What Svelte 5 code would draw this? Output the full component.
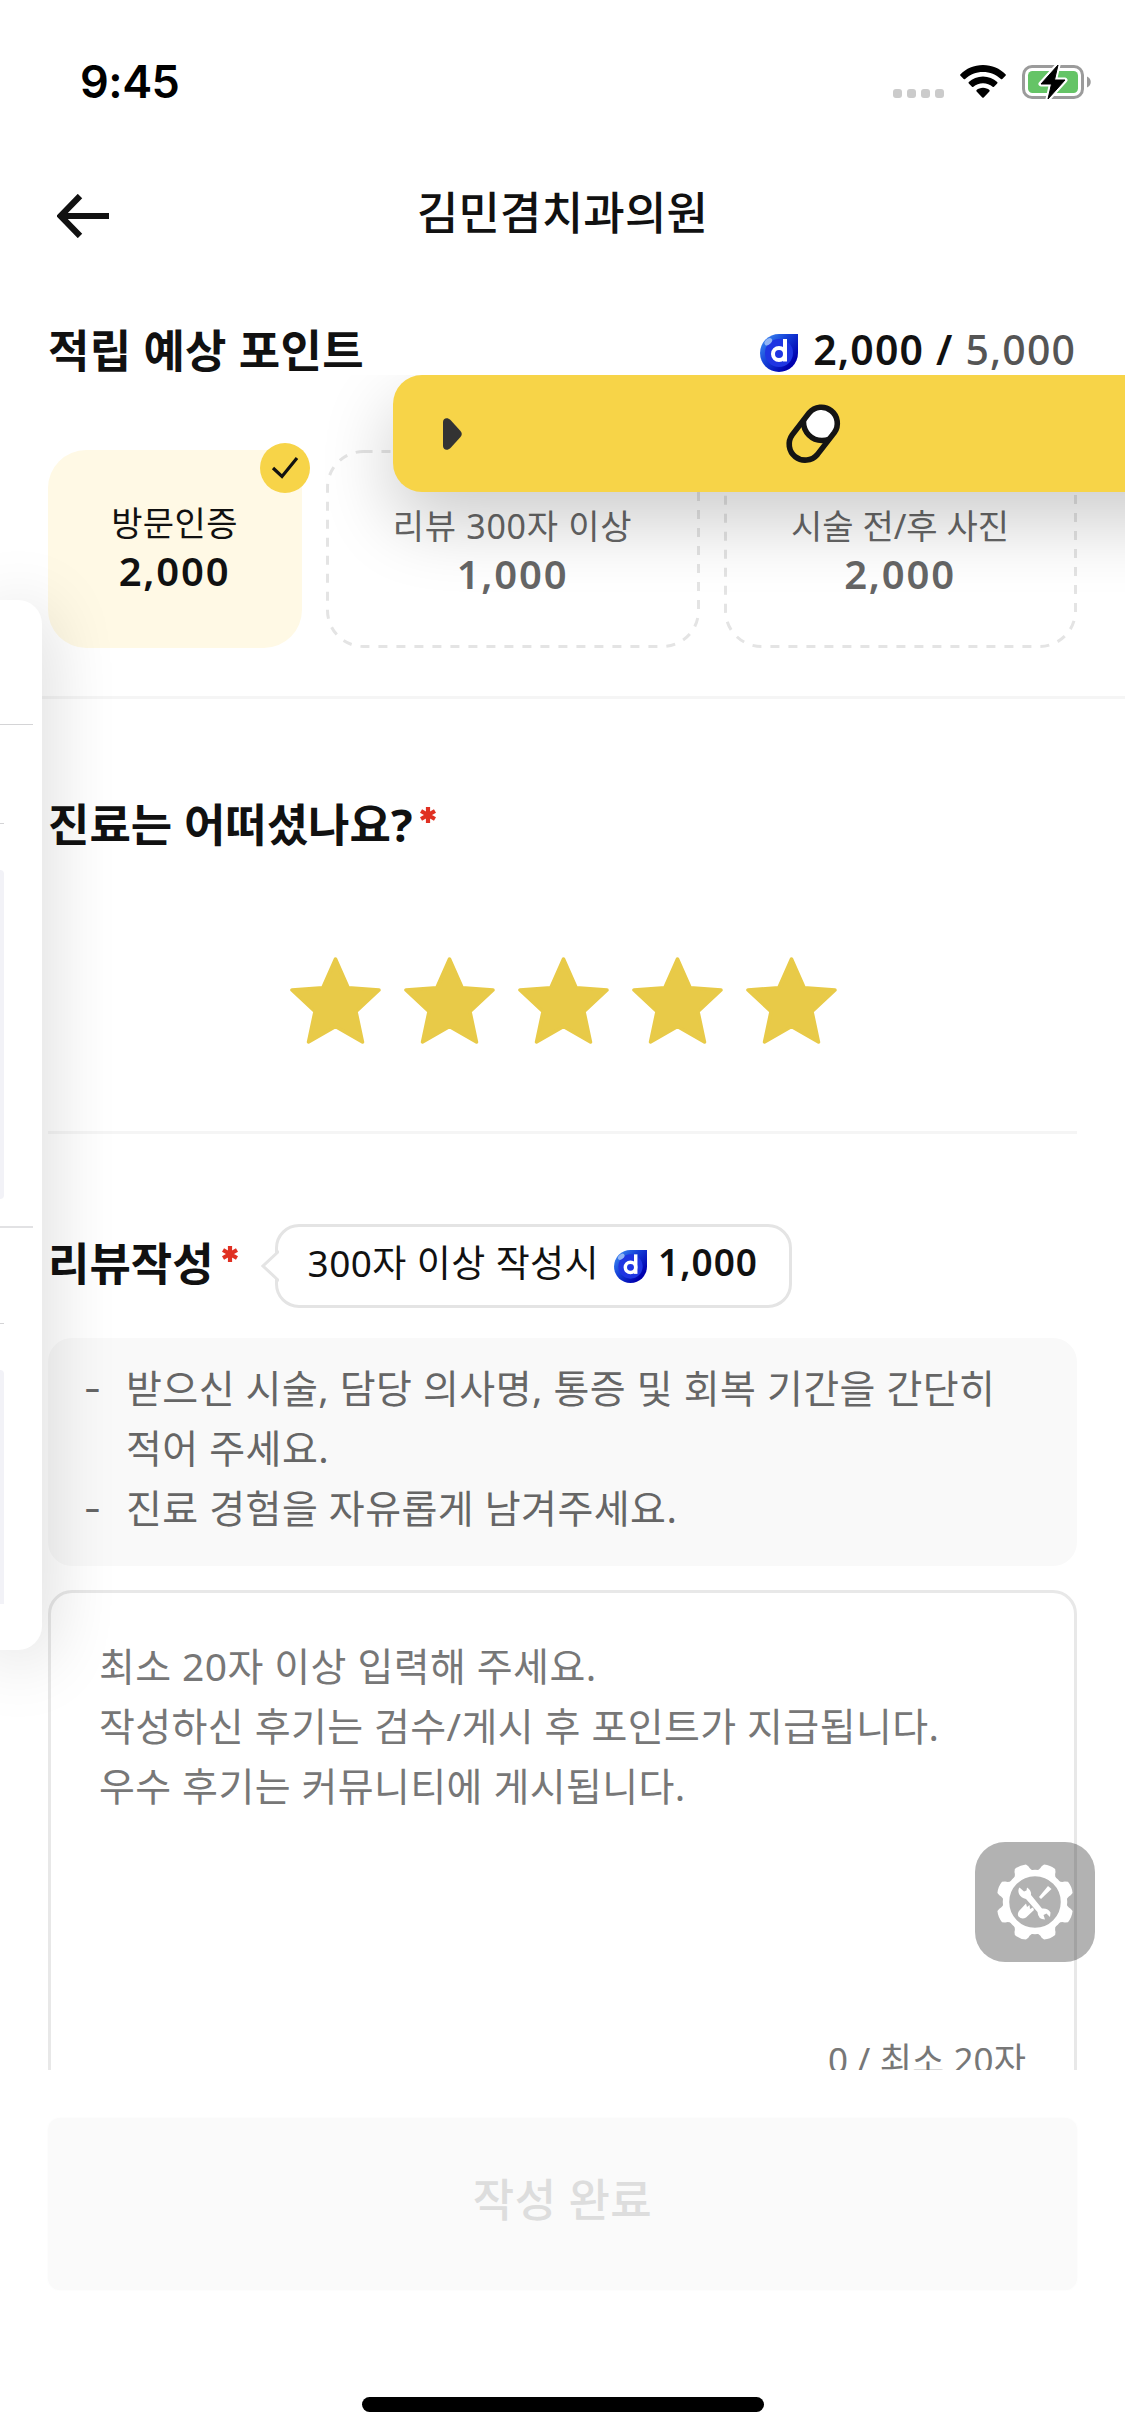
<script>
  const stars = [1, 2, 3, 4, 5];
  const teeth = [22.5, 67.5, 112.5, 157.5, 202.5, 247.5, 292.5, 337.5];
  const goals = [
    { label: '방문인증', points: '2,000', size: 'small', done: true },
    { label: '리뷰 300자 이상', points: '1,000', size: 'large', done: false },
    { label: '시술 전/후 사진', points: '2,000', size: 'medium', done: false }
  ];
</script>

{#snippet coin()}
  <svg class="coin" viewBox="0 0 38 38">
    <defs>
      <linearGradient id="coinEdge" x1="0.1" y1="0.1" x2="0.85" y2="0.75">
        <stop offset="0" stop-color="#3a86f0" />
        <stop offset="0.45" stop-color="#1540d8" />
        <stop offset="1" stop-color="#0000ae" />
      </linearGradient>
    </defs>
    <path d="M19 0H38V19A19 19 0 1 1 19 0Z" fill="url(#coinEdge)" />
    <circle cx="19" cy="19" r="14" fill="#1f35e2" />
    <ellipse cx="8.3" cy="7.7" rx="4.4" ry="2.8" transform="rotate(-42 8.3 7.7)" fill="#92b4f4" />
    <circle cx="19" cy="20" r="6" fill="none" stroke="#fff" stroke-width="4" />
    <path d="M25 5V27.5" stroke="#fff" stroke-width="4" />
  </svg>
{/snippet}

<div class="screen">
  <div class="status">
    <span class="clock">9:45</span>
    <div class="indicators">
      <div class="cells"><i></i><i></i><i></i><i></i></div>
      <svg class="wifi" viewBox="0 0 46 34">
        <path d="M23 0C32 0 40 3.600 45.500 9.300Q46.200 10 45.500 10.800L42.300 14Q41.600 14.600 40.900 14C36 9.500 30 7 23 7S10 9.500 5.100 14Q4.400 14.600 3.700 14L.5 10.800Q-.2 10 .5 9.300C6 3.600 14 0 23 0Z" />
        <path d="M23 11.500C28.500 11.500 33.500 13.600 37.200 17.100Q37.900 17.800 37.200 18.500L34 21.700Q33.300 22.300 32.600 21.700C30 19.500 26.700 18.200 23 18.200S16 19.500 13.400 21.700Q12.700 22.300 12 21.700L8.800 18.500Q8.100 17.800 8.800 17.100C12.500 13.600 17.500 11.500 23 11.500Z" />
        <path d="M23 22.800C25.600 22.800 27.800 23.700 29.400 25.100Q30 25.800 29.400 26.500L23.700 32.400Q23 33.200 22.300 32.400L16.600 26.500Q16 25.800 16.600 25.100C18.200 23.700 20.400 22.800 23 22.800Z" />
      </svg>
      <svg class="battery" viewBox="0 0 70 36">
        <rect x="1.500" y="2.500" width="59" height="31" rx="8.500" fill="none" stroke="#9b9b9b" stroke-width="3" />
        <rect x="6" y="7" width="50" height="22" rx="4.500" fill="#65c466" />
        <path d="M65 12.500C70 14.500 70 21.500 65 23.500Z" fill="#9b9b9b" />
        <path d="M36 1L19 20H29.500L26 35L43 16H32.500Z" fill="#000" stroke="#fff" stroke-width="5" stroke-linejoin="round" />
        <path d="M36 1L19 20H29.500L26 35L43 16H32.500Z" fill="#000" stroke="#000" stroke-width="1" stroke-linejoin="round" />
      </svg>
    </div>
  </div>

  <header>
    <svg class="back" viewBox="0 0 52 44">
      <path d="M52 22H4M23 2L3.500 22L23 42" fill="none" stroke="#111" stroke-width="6.200" />
    </svg>
    <h1>김민겸치과의원</h1>
  </header>

  <main>
    <section class="points">
      <div class="points-head">
        <h2>적립 예상 포인트</h2>
        <div class="total">
          {@render coin()}
          <b>2,000</b><b class="slash">/</b><span>5,000</span>
        </div>
      </div>
      <div class="goals">
        {#each goals as goal}
          <div class="goal {goal.size}" class:done={goal.done}>
            {#if goal.done}
              <svg class="badge" viewBox="0 0 50 50">
                <circle cx="25" cy="25" r="25" fill="#f7d448" />
                <path d="M13 25L22 33.500L37 15" fill="none" stroke="#111" stroke-width="3.200" />
              </svg>
            {:else}
              <svg class="outline"><rect /></svg>
            {/if}
            <span>{goal.label}</span>
            <b>{goal.points}</b>
          </div>
        {/each}
      </div>
    </section>

    <section class="rating">
      <h2>진료는 어떠셨나요?<svg class="req" viewBox="0 0 16 16"><path d="M8 0V16M1 4L15 12M1 12L15 4" /></svg></h2>
      <div class="stars">
        {#each stars as star}
          <svg viewBox="0 0 91 87">
            <path d="M45.500 2L58.200 30.700L89 33L66 54.500L72.500 85L45.500 69.500L18.500 85L25 54.500L2 33L32.800 30.700Z" />
          </svg>
        {/each}
      </div>
    </section>

    <section class="review">
      <div class="review-head">
        <h2>리뷰작성<svg class="req" viewBox="0 0 16 16"><path d="M8 0V16M1 4L15 12M1 12L15 4" /></svg></h2>
        <div class="bubble">
          <svg class="tail" viewBox="0 0 18 36"><path d="M18 3L2 18L18 33" /></svg>
          <span>300자 이상 작성시</span>
          {@render coin()}
          <b>1,000</b>
        </div>
      </div>
      <ul>
        <li>받으신 시술, 담당 의사명, 통증 및 회복 기간을 간단히<br />적어 주세요.</li>
        <li>진료 경험을 자유롭게 남겨주세요.</li>
      </ul>
      <div class="editor">
        <p>최소 20자 이상 입력해 주세요.<br />작성하신 후기는 검수/게시 후 포인트가 지급됩니다.<br />우수 후기는 커뮤니티에 게시됩니다.</p>
        <span class="count">0 / 최소 20자</span>
      </div>
    </section>
  </main>

  <button class="submit" disabled>작성 완료</button>
  <div class="home"></div>

  <aside class="drawer">
    <hr />
    <hr class="short" />
    <div class="block first"></div>
    <hr class="second" />
    <hr class="short" />
    <div class="block last"></div>
  </aside>

  <div class="banner">
    <svg class="play" viewBox="0 0 19 32">
      <path d="M0 4C0 0 4.500 -1 7.500 2L17.500 13Q20 16 17.500 19L7.500 30C4.500 33 0 32 0 28Z" fill="#333" />
    </svg>
    <svg class="pill" viewBox="0 0 56 62">
      <defs>
        <clipPath id="pillBody"><path d="M24.200 10.800A16 16 0 0 1 49.300 30.600L32.300 52.600A16 16 0 0 1 7.200 32.800Z" /></clipPath>
      </defs>
      <g clip-path="url(#pillBody)">
        <circle cx="37" cy="20" r="18.500" fill="#fff" stroke="#141414" stroke-width="5.500" />
      </g>
      <path d="M24.200 10.800A16 16 0 0 1 49.300 30.600L32.300 52.600A16 16 0 0 1 7.200 32.800Z" fill="none" stroke="#141414" stroke-width="5.600" />
    </svg>
  </div>

  <div class="tools">
    <svg viewBox="-40 -40 80 80">
      <circle r="29" fill="none" stroke="#fff" stroke-width="6.500" />
      {#each teeth as angle}
        <path d="M-11.800 -28.500Q-8 -31 -7.500 -35.500L-6 -38.200Q0 -40 6 -38.200L7.500 -35.500Q8 -31 11.800 -28.500Z" transform="rotate({angle})" fill="#fff" />
      {/each}
      <path d="M4 -5L13 -16L16.500 -13L6 -3Z" fill="#fff" />
      <path d="M-16 9L-9 1.500L-8 5L-5.500 3L-5 7L-2 5.500L-1 8L-9 15.500Q-13 18 -16.500 14.500Q-18 12 -16 9Z" fill="#fff" />
      <path d="M-16 -8Q-17.500 -12 -15.500 -14.500L-11 -10.500L-8.500 -11.500L-8 -14.500Q-3.500 -12 -4 -7L7 6.500Q13 6 15.500 10.500L15 15L11.500 11.500L8.500 13L10 17.500Q3 17.500 2.500 10L-9 -3Q-14 -4 -16 -8Z" fill="#fff" />
    </svg>
  </div>
</div>

<style>
  :global(body) {
    background: #fff;
  }
  .screen {
    position: relative;
    display: flex;
    flex-direction: column;
    width: 1125px;
    height: 2436px;
    overflow: hidden;
    background: #fff;
    color: #111;
    font-family: 'Noto Sans', 'Noto Sans CJK KR', sans-serif;
    letter-spacing: 0.4px;
  }
  svg {
    display: block;
    flex: none;
  }
  h1,
  h2,
  p,
  ul {
    margin: 0;
    padding: 0;
  }
  .status {
    display: flex;
    align-items: center;
    justify-content: space-between;
    box-sizing: border-box;
    height: 132px;
    padding: 32px 33px 0 80px;
  }
  .clock {
    font: 600 45px/54px Inter, sans-serif;
    letter-spacing: -0.5px;
    color: #000;
  }
  .indicators {
    display: flex;
    align-items: center;
  }
  .cells {
    display: flex;
    gap: 5px;
    margin: 23px 16px 0 0;
  }
  .cells i {
    width: 9px;
    height: 9px;
    border-radius: 3px;
    background: #cbcbcb;
  }
  .wifi {
    width: 46px;
    height: 34px;
    margin-right: 16px;
  }
  .battery {
    width: 70px;
    height: 36px;
  }
  header {
    display: grid;
    grid-template-columns: 52px 1fr 52px;
    align-items: center;
    height: 168px;
    padding: 0 57px;
  }
  .back {
    width: 52px;
    height: 44px;
  }
  h1 {
    padding-bottom: 6px;
    font-size: 45px;
    font-weight: 500;
    line-height: 60px;
    text-align: center;
    letter-spacing: 0.2px;
  }
  main {
    height: 1770px;
    overflow: hidden;
  }
  h2 {
    display: flex;
    font-size: 45px;
    font-weight: 700;
    line-height: 60px;
    letter-spacing: 0;
  }
  .req {
    width: 16px;
    height: 16px;
    margin: 12px 0 0 8px;
  }
  .req path {
    fill: none;
    stroke: #e03022;
    stroke-width: 4.200;
  }
  b {
    font-weight: 600;
  }
  .points {
    padding: 0 48px 48px;
    border-bottom: 3px solid #f5f5f5;
  }
  .points-head {
    display: flex;
    align-items: center;
    justify-content: space-between;
    height: 102px;
  }
  .points-head h2 {
    letter-spacing: 0.3px;
  }
  .total {
    display: flex;
    align-items: center;
    margin: -5px 1px 0 0;
    font-size: 41px;
    line-height: 60px;
    letter-spacing: 1.1px;
  }
  .total .coin {
    width: 38px;
    height: 38px;
    margin: 9px 15px 0 0;
  }
  .total .slash {
    margin: 0 12px;
  }
  .total span {
    color: #555;
    font-weight: 500;
  }
  .goals {
    display: flex;
    gap: 24px;
    margin-top: 48px;
  }
  .goal {
    position: relative;
    display: flex;
    flex-direction: column;
    box-sizing: border-box;
    height: 198px;
    padding: 52px 1px 0 0;
    color: #666;
    font-size: 34px;
    line-height: 48px;
    text-align: center;
  }
  .goal b {
    font-size: 40px;
    letter-spacing: 1.8px;
  }
  .goal.done {
    padding-top: 49px;
    border-radius: 38px;
    background: #fff9e5;
    color: #111;
  }
  .small {
    width: 254px;
  }
  .large {
    width: 374px;
    letter-spacing: 0.7px;
  }
  .medium {
    width: 353px;
    letter-spacing: 0;
  }
  .badge {
    position: absolute;
    top: -7px;
    right: -8px;
    width: 50px;
    height: 50px;
  }
  .outline {
    position: absolute;
    inset: 0;
    width: 100%;
    height: 100%;
  }
  .outline rect {
    x: 1.5px;
    y: 1.5px;
    width: calc(100% - 3px);
    height: calc(100% - 3px);
    rx: 36px;
    fill: none;
    stroke: #e4e4e4;
    stroke-width: 3px;
    stroke-dasharray: 9 9;
  }
  .rating {
    margin: 0 48px;
    padding: 96px 0 87px;
    border-bottom: 3px solid #f5f5f5;
  }
  .stars {
    display: flex;
    justify-content: center;
    gap: 23px;
    margin-top: 102px;
    padding-left: 2px;
  }
  .stars svg {
    width: 91px;
    height: 87px;
  }
  .stars path {
    fill: #e8ca48;
    stroke: #e8ca48;
    stroke-width: 3.500;
    stroke-linejoin: round;
  }
  .review {
    padding: 90px 48px 0;
  }
  .review-head {
    display: flex;
    align-items: center;
    gap: 37px;
  }
  .review-head h2 {
    margin-top: -5px;
  }
  .bubble {
    position: relative;
    display: flex;
    align-items: center;
    box-sizing: border-box;
    width: 517px;
    height: 84px;
    padding: 0 0 10px 30px;
    border: 3px solid #e4e4e4;
    border-radius: 24px;
    font-size: 37px;
    white-space: nowrap;
  }
  .bubble .coin {
    width: 33px;
    height: 33px;
    margin: 10px 11px 0 15px;
  }
  .bubble b {
    letter-spacing: 1px;
  }
  .tail {
    position: absolute;
    left: -17px;
    top: 21px;
    width: 18px;
    height: 36px;
  }
  .tail path {
    fill: #fff;
    stroke: #e4e4e4;
    stroke-width: 3;
  }
  ul {
    box-sizing: border-box;
    height: 228px;
    margin-top: 30px;
    padding: 20px 36px 0;
    border-radius: 24px;
    background: #f9f9f9;
    color: #666;
    font-size: 39px;
    line-height: 60px;
    letter-spacing: 0.45px;
    list-style: none;
    white-space: nowrap;
  }
  li {
    display: grid;
    grid-template-columns: 42px 1fr;
  }
  li::before {
    content: '-';
    grid-row: span 2;
    transform: translate(3px, -2px) scaleX(1.3);
    transform-origin: 9px 50%;
  }
  .editor {
    display: flex;
    flex-direction: column;
    justify-content: space-between;
    box-sizing: border-box;
    height: 540px;
    margin-top: 24px;
    padding: 43px 48px 42px;
    border: 3px solid #e8e8e8;
    border-radius: 24px;
    color: #777;
    font-size: 39px;
    line-height: 60px;
    white-space: nowrap;
  }
  .count {
    align-self: flex-end;
    font-size: 35px;
    line-height: 50px;
    letter-spacing: 0.1px;
  }
  .submit {
    height: 172px;
    margin: 48px 48px 0;
    padding: 0 0 13px;
    border: 0;
    border-radius: 12px;
    background: #fafafa;
    box-shadow: 0 0 3px #fafafa;
    color: #ddd;
    font: inherit;
    font-size: 45px;
    font-weight: 500;
    letter-spacing: 0.4px;
  }
  .home {
    width: 402px;
    height: 15px;
    margin: 107px auto 0;
    border-radius: 8px;
    background: #000;
  }
  /* Drawer peeking in from the left edge */
  .drawer {
    position: absolute;
    left: 0;
    top: 600px;
    box-sizing: border-box;
    width: 42px;
    height: 1050px;
    padding-top: 124px;
    border-radius: 0 24px 24px 0;
    background: #fff;
    box-shadow: 0 9px 72px rgba(0, 0, 0, 0.2);
  }
  .drawer hr {
    width: 33px;
    height: 1px;
    margin: 0;
    border: 0;
    background: #d4d4d6;
  }
  .drawer hr.short {
    width: 4px;
    margin: 98px 0 46px;
  }
  .drawer hr.second {
    height: 2px;
    margin-top: 27px;
    background: #e2e2e4;
  }
  .drawer hr.second + .short {
    margin: 95px 0 46px;
  }
  .block {
    width: 4px;
    background: #f2f2f7;
  }
  .block.first {
    height: 329px;
    border-radius: 0 4px 4px 0;
  }
  .block.last {
    height: 234px;
    border-radius: 0 4px 0 0;
  }
  .banner {
    position: absolute;
    left: 393px;
    top: 375px;
    display: flex;
    align-items: center;
    gap: 323px;
    box-sizing: border-box;
    width: 840px;
    height: 117px;
    padding-left: 50px;
    border-radius: 29px;
    background: #f7d448;
    box-shadow: 0 30px 72px rgba(0, 0, 0, 0.2);
    /* The shadow falls downward only */
    clip-path: inset(0 -20px -140px -80px);
  }
  .play {
    width: 19px;
    height: 32px;
  }
  .pill {
    width: 56px;
    height: 62px;
    margin-top: -1px;
  }
  .tools {
    position: absolute;
    left: 975px;
    top: 1842px;
    display: grid;
    place-items: center;
    width: 120px;
    height: 120px;
    border-radius: 30px;
    background: rgba(0, 0, 0, 0.3);
  }
  .tools svg {
    width: 80px;
    height: 80px;
  }
</style>
